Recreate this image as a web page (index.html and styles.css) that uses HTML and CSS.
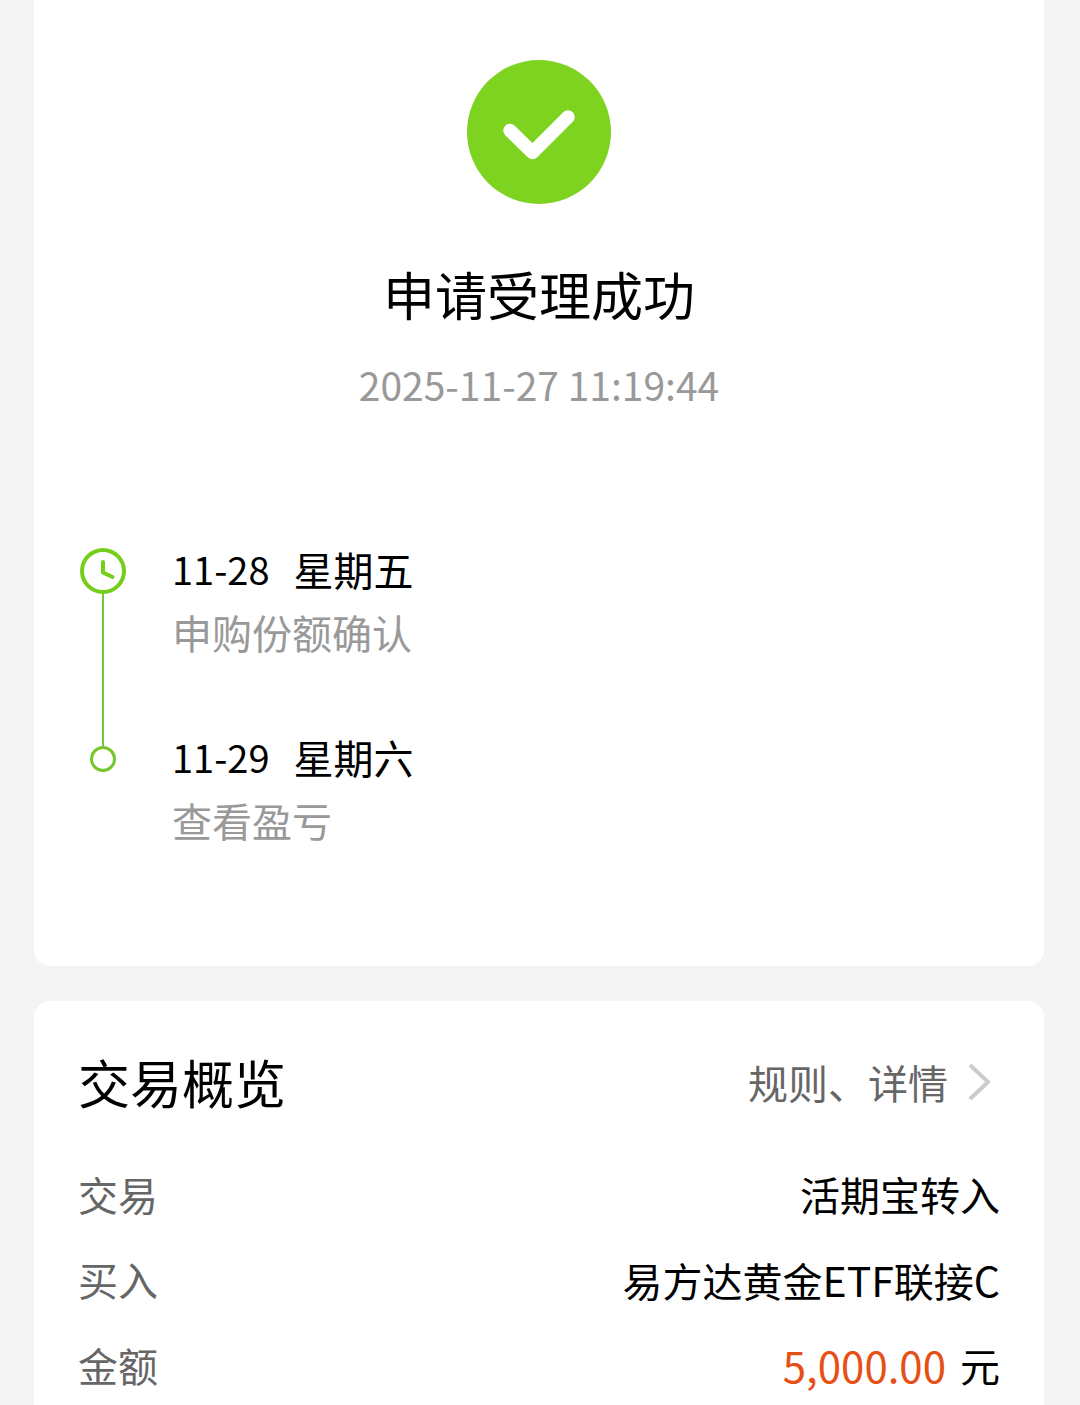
FILE: index.html
```html
<!DOCTYPE html>
<html lang="zh-CN">
<head>
<meta charset="utf-8">
<meta name="viewport" content="width=device-width, initial-scale=1">
<title>申请受理成功</title>
<link rel="stylesheet" href="styles.css">
</head>
<body>
<main class="page">
  <section class="card result">
    <svg class="result-icon" viewBox="0 0 144 144" aria-hidden="true">
      <circle cx="72" cy="72" r="72" fill="#7ed321"/>
      <path d="M43 70.500L65.500 92.500L101 57" fill="none" stroke="#fff" stroke-width="13.500" stroke-linecap="round" stroke-linejoin="round"/>
    </svg>
    <h1 class="result-title">申请受理成功</h1>
    <time class="result-time" datetime="2025-11-27T11:19:44">2025-11-27 11:19:44</time>
    <ol class="timeline">
      <li class="step">
        <div class="rail">
          <svg class="clock" viewBox="0 0 46 46" aria-hidden="true">
            <circle cx="23" cy="23" r="21" fill="none" stroke="#75cf1a" stroke-width="4"/>
            <path d="M23 14V24.500L32.500 29" fill="none" stroke="#75cf1a" stroke-width="4" stroke-linecap="round" stroke-linejoin="round"/>
          </svg>
          <span class="line"></span>
        </div>
        <div class="step-text">
          <p class="step-date"><span class="num">11-28</span><span>星期五</span></p>
          <p class="step-note">申购份额确认</p>
        </div>
      </li>
      <li class="step">
        <div class="rail"><span class="line line-short"></span><span class="dot"></span></div>
        <div class="step-text">
          <p class="step-date"><span class="num">11-29</span><span>星期六</span></p>
          <p class="step-note">查看盈亏</p>
        </div>
      </li>
    </ol>
  </section>
  <section class="card overview">
    <header class="overview-head">
      <h2 class="overview-title">交易概览</h2>
      <a class="more" href="#rules">规则、详情
        <svg class="chevron" viewBox="0 0 24 40" aria-hidden="true"><path d="M2 3L20 20L2 37" fill="none" stroke="#ccc" stroke-width="4"/></svg>
      </a>
    </header>
    <dl class="rows" id="rules">
      <div class="row"><dt>交易</dt><dd>活期宝转入</dd></div>
      <div class="row"><dt>买入</dt><dd>易方达黄金<span class="latin">ETF</span>联接<span class="latin">C</span></dd></div>
      <div class="row"><dt>金额</dt><dd class="money"><span class="amount">5,000.00</span><span>元</span></dd></div>
    </dl>
  </section>
</main>
</body>
</html>
```
FILE: styles.css
```css
* { box-sizing: border-box; }
body, h1, h2, p, ol, dl, dd { margin: 0; padding: 0; }
body {
  background: #f4f4f4;
  color: #000;
  font-family: "Noto Sans CJK SC", sans-serif;
  font-size: 40px;
  line-height: 60px;
}
h1, h2 { font-weight: 400; }
.page { display: flex; flex-direction: column; gap: 35px; padding: 0 36px 0 34px; }
.card { background: #fff; }
.result {
  display: flex;
  flex-direction: column;
  align-items: center;
  padding: 60px 44px 116px;
  border-radius: 0 0 16px 16px;
}
.result-icon { display: block; width: 144px; height: 144px; }
.result-title { margin-top: 50px; font-size: 52px; line-height: 80px; }
.result-time { margin-top: 20px; color: #999; font-size: 39px; }
.timeline { align-self: stretch; margin-top: 125px; list-style: none; }
.step { display: flex; gap: 44px; height: 188px; }
.step:last-child { height: auto; }
.rail { display: flex; flex: none; flex-direction: column; align-items: center; width: 50px; }
.clock { flex: none; width: 46px; height: 46px; margin-top: 9px; }
.line { flex: 1; width: 2px; background: #78c63a; }
.line-short { flex: none; height: 19px; }
.dot { width: 26px; height: 26px; border: 3px solid #75c62a; border-radius: 50%; }
.step-date { display: flex; gap: 24px; }
.num { font-size: 38px; }
.step-note { margin-top: 3px; color: #999; }
.overview { padding: 41px 44px 60px; border-radius: 16px 16px 0 0; }
.overview-head { display: flex; align-items: center; justify-content: space-between; }
.overview-title { font-size: 52px; line-height: 80px; }
.more { display: flex; align-items: center; gap: 20px; color: #666; text-decoration: none; }
.chevron { width: 24px; height: 40px; margin-right: 8px; }
.rows { display: grid; gap: 25px; margin-top: 42px; }
.row { display: flex; justify-content: space-between; }
.row dt { color: #666; }
.latin { font-size: 41px; }
.amount { color: #e65015; font-size: 42px; }
.money { display: flex; gap: 14px; }
```
